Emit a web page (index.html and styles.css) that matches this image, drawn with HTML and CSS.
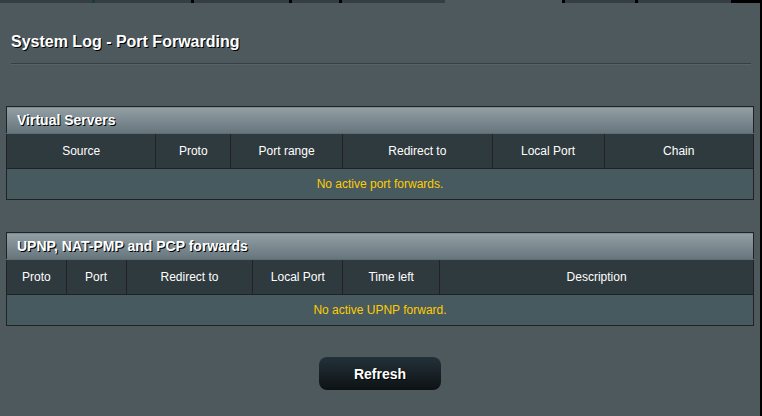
FILE: index.html
```html
<!DOCTYPE html>
<html>
<head>
<meta charset="utf-8">
<title>System Log - Port Forwarding</title>
<link rel="stylesheet" href="styles.css">
</head>
<body>
<div class="page">
  <div class="tabs">
    <span class="tab" style="width:92px"></span>
    <span class="sep sep-teal"></span>
    <span class="tab" style="width:96px"></span>
    <span class="sep"></span>
    <span class="tab" style="width:95px"></span>
    <span class="sep"></span>
    <span class="tab" style="width:47px"></span>
    <span class="sep"></span>
    <span class="tab" style="width:103px"></span>
    <span class="tab tab-active" style="width:117px"></span>
    <span class="sep"></span>
    <span class="tab" style="width:70px"></span>
    <span class="sep"></span>
    <span class="tab" style="width:93px"></span>
    <span class="tab-end"></span>
  </div>

  <h1 class="title">System Log - Port Forwarding</h1>
  <div class="split-line"></div>

  <table class="form-table vs-table">
    <colgroup>
      <col class="w20"><col class="w10"><col class="w15"><col class="w20"><col class="w15"><col class="w20">
    </colgroup>
    <thead>
      <tr><td class="table-title" colspan="6">Virtual Servers</td></tr>
    </thead>
    <tbody>
      <tr class="col-head">
        <th>Source</th>
        <th>Proto</th>
        <th>Port range</th>
        <th>Redirect to</th>
        <th>Local Port</th>
        <th>Chain</th>
      </tr>
      <tr class="empty-row"><td colspan="6">No active port forwards.</td></tr>
    </tbody>
  </table>

  <table class="form-table upnp-table">
    <colgroup>
      <col class="w8"><col class="w8"><col class="w17"><col class="w12"><col class="w13"><col class="w42">
    </colgroup>
    <thead>
      <tr><td class="table-title" colspan="6">UPNP, NAT-PMP and PCP forwards</td></tr>
    </thead>
    <tbody>
      <tr class="col-head">
        <th>Proto</th>
        <th>Port</th>
        <th>Redirect to</th>
        <th>Local Port</th>
        <th>Time left</th>
        <th>Description</th>
      </tr>
      <tr class="empty-row"><td colspan="6">No active UPNP forward.</td></tr>
    </tbody>
  </table>

  <div class="actions">
    <button class="button-gen" type="button">Refresh</button>
  </div>
</div>
</body>
</html>
```

FILE: styles.css
```css
html, body {
  margin: 0;
  padding: 0;
  background: #000;
}

body {
  font-family: "Liberation Sans", Arial, sans-serif;
  color: #fff;
}

.page {
  width: 760px;
  height: 416px;
  background: #4d595d;
  display: flex;
  flex-direction: column;
  overflow: hidden;
}

.tabs {
  display: flex;
  height: 3px;
  flex: none;
}

.tab {
  display: block;
  height: 3px;
  background: #343e43;
  flex: none;
}

.tab-active {
  background: #4d595d;
}

.sep {
  display: block;
  width: 3px;
  height: 3px;
  background: #000;
  flex: none;
}

.sep-teal {
  background: #1d3a40;
}

.tab-end {
  display: block;
  flex: 1;
  height: 3px;
  background: #000;
}

.title {
  margin: 30px 0 0 11px;
  font-size: 16px;
  line-height: 18px;
  font-weight: bold;
  text-shadow: 1px 1px 0 #000;
}

.split-line {
  margin: 12px 0 0 11px;
  width: 740px;
  height: 1px;
  background: #363f43;
  border-bottom: 1px solid #56636a;
}

.form-table {
  width: 748px;
  margin: 41px 0 0 6px;
  border-collapse: collapse;
  table-layout: fixed;
  font-size: 12px;
}

.upnp-table {
  margin-top: 32px;
}

.form-table td,
.form-table th {
  padding: 0;
  border: 1px solid #222;
}

.table-title {
  height: 26px;
  padding-left: 10px !important;
  text-align: left;
  font-size: 14px;
  font-weight: bold;
  text-shadow: 1px 1px 0 #000;
  background: linear-gradient(to bottom, #92a0a5 0%, #66757c 100%);
  border-bottom-color: #5f6d73 !important;
}

.col-head th {
  height: 34px;
  font-weight: normal;
  text-align: center;
  background: #2f3a3e;
  color: #fff;
}

.empty-row td {
  height: 30px;
  text-align: center;
  background: #475a5f;
  color: #ffcc00;
}

.w8 { width: 8%; }
.w10 { width: 10%; }
.w12 { width: 12%; }
.w13 { width: 13%; }
.w15 { width: 15%; }
.w17 { width: 17%; }
.w20 { width: 20%; }
.w42 { width: 42%; }

.actions {
  display: flex;
  justify-content: center;
  margin-top: 31px;
}

.button-gen {
  width: 122px;
  height: 33px;
  border: 0;
  border-radius: 8px;
  background: linear-gradient(to bottom, #233139 0%, #0d1214 100%);
  color: #fff;
  font-family: "Liberation Sans", Arial, sans-serif;
  font-size: 14px;
  font-weight: bold;
  text-shadow: 1px 1px 0 #000;
  padding: 0;
  cursor: pointer;
}
```
